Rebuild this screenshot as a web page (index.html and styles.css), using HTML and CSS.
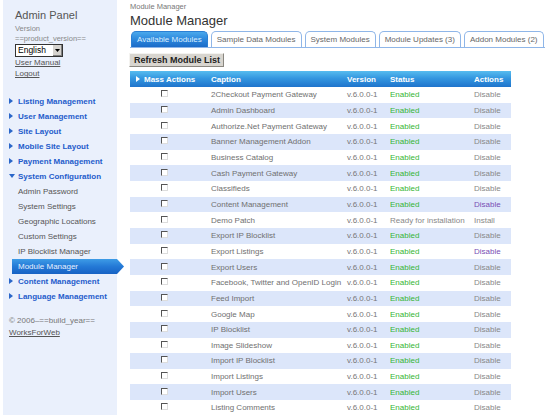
FILE: index.html
```html
<!DOCTYPE html>
<html lang="en">
<head>
<meta charset="utf-8">
<title>Module Manager</title>
<link rel="stylesheet" href="styles.css">
</head>
<body>
<div class="page">
  <aside class="sidebar">
    <div class="brand">
      <h1 class="brand-title">Admin Panel</h1>
      <div class="meta">Version</div>
      <div class="meta">==product_version==</div>
      <div class="lang-select"><span class="lang-value">English</span><span class="lang-btn"><svg width="5" height="3" viewBox="0 0 5 3"><path d="M0 0h5L2.5 3z" fill="#000"/></svg></span></div>
      <a class="side-link" href="#">User Manual</a>
      <a class="side-link" href="#">Logout</a>
    </div>
    <nav class="nav">
      <div class="nav-section"><span class="tri tri-right"></span>Listing Management</div>
      <div class="nav-section"><span class="tri tri-right"></span>User Management</div>
      <div class="nav-section"><span class="tri tri-right"></span>Site Layout</div>
      <div class="nav-section"><span class="tri tri-right"></span>Mobile Site Layout</div>
      <div class="nav-section"><span class="tri tri-right"></span>Payment Management</div>
      <div class="nav-section"><span class="tri tri-down"></span>System Configuration</div>
      <div class="nav-item">Admin Password</div>
      <div class="nav-item">System Settings</div>
      <div class="nav-item">Geographic Locations</div>
      <div class="nav-item">Custom Settings</div>
      <div class="nav-item">IP Blocklist Manager</div>
      <div class="nav-item nav-active">Module Manager</div>
      <div class="nav-section"><span class="tri tri-right"></span>Content Management</div>
      <div class="nav-section"><span class="tri tri-right"></span>Language Management</div>
    </nav>
    <div class="copyright">
      <div>© 2006–==build_year==</div>
      <a class="side-link" href="#">WorksForWeb</a>
    </div>
  </aside>
  <main class="main">
    <div class="breadcrumb">Module Manager</div>
    <h2 class="title">Module Manager</h2>
    <div class="tabs">
      <span class="tab tab-active">Available Modules</span>
      <span class="tab">Sample Data Modules</span>
      <span class="tab">System Modules</span>
      <span class="tab">Module Updates (3)</span>
      <span class="tab">Addon Modules (2)</span>
    </div>
    <div class="toolbar"><button class="btn">Refresh Module List</button></div>
    <div class="grid">
      <div class="row head">
        <div class="c1"><span class="tri tri-white"></span>Mass Actions</div>
        <div>Caption</div>
        <div>Version</div>
        <div>Status</div>
        <div>Actions</div>
      </div>
      <div class="row"><div class="c1"><span class="cb"></span></div><div class="cap">2Checkout Payment Gateway</div><div class="ver">v.6.0.0-1</div><div class="ok">Enabled</div><div class="act">Disable</div></div>
      <div class="row"><div class="c1"><span class="cb"></span></div><div class="cap">Admin Dashboard</div><div class="ver">v.6.0.0-1</div><div class="ok">Enabled</div><div class="act">Disable</div></div>
      <div class="row"><div class="c1"><span class="cb"></span></div><div class="cap">Authorize.Net Payment Gateway</div><div class="ver">v.6.0.0-1</div><div class="ok">Enabled</div><div class="act">Disable</div></div>
      <div class="row"><div class="c1"><span class="cb"></span></div><div class="cap">Banner Management Addon</div><div class="ver">v.6.0.0-1</div><div class="ok">Enabled</div><div class="act">Disable</div></div>
      <div class="row"><div class="c1"><span class="cb"></span></div><div class="cap">Business Catalog</div><div class="ver">v.6.0.0-1</div><div class="ok">Enabled</div><div class="act">Disable</div></div>
      <div class="row"><div class="c1"><span class="cb"></span></div><div class="cap">Cash Payment Gateway</div><div class="ver">v.6.0.0-1</div><div class="ok">Enabled</div><div class="act">Disable</div></div>
      <div class="row"><div class="c1"><span class="cb"></span></div><div class="cap">Classifieds</div><div class="ver">v.6.0.0-1</div><div class="ok">Enabled</div><div class="act">Disable</div></div>
      <div class="row"><div class="c1"><span class="cb"></span></div><div class="cap">Content Management</div><div class="ver">v.6.0.0-1</div><div class="ok">Enabled</div><div class="act visited">Disable</div></div>
      <div class="row"><div class="c1"><span class="cb"></span></div><div class="cap">Demo Patch</div><div class="ver">v.6.0.0-1</div><div class="ready">Ready for installation</div><div class="act">Install</div></div>
      <div class="row"><div class="c1"><span class="cb"></span></div><div class="cap">Export IP Blocklist</div><div class="ver">v.6.0.0-1</div><div class="ok">Enabled</div><div class="act">Disable</div></div>
      <div class="row"><div class="c1"><span class="cb"></span></div><div class="cap">Export Listings</div><div class="ver">v.6.0.0-1</div><div class="ok">Enabled</div><div class="act visited">Disable</div></div>
      <div class="row"><div class="c1"><span class="cb"></span></div><div class="cap">Export Users</div><div class="ver">v.6.0.0-1</div><div class="ok">Enabled</div><div class="act">Disable</div></div>
      <div class="row"><div class="c1"><span class="cb"></span></div><div class="cap">Facebook, Twitter and OpenID Login</div><div class="ver">v.6.0.0-1</div><div class="ok">Enabled</div><div class="act">Disable</div></div>
      <div class="row"><div class="c1"><span class="cb"></span></div><div class="cap">Feed Import</div><div class="ver">v.6.0.0-1</div><div class="ok">Enabled</div><div class="act">Disable</div></div>
      <div class="row"><div class="c1"><span class="cb"></span></div><div class="cap">Google Map</div><div class="ver">v.6.0.0-1</div><div class="ok">Enabled</div><div class="act">Disable</div></div>
      <div class="row"><div class="c1"><span class="cb"></span></div><div class="cap">IP Blocklist</div><div class="ver">v.6.0.0-1</div><div class="ok">Enabled</div><div class="act">Disable</div></div>
      <div class="row"><div class="c1"><span class="cb"></span></div><div class="cap">Image Slideshow</div><div class="ver">v.6.0.0-1</div><div class="ok">Enabled</div><div class="act">Disable</div></div>
      <div class="row"><div class="c1"><span class="cb"></span></div><div class="cap">Import IP Blocklist</div><div class="ver">v.6.0.0-1</div><div class="ok">Enabled</div><div class="act">Disable</div></div>
      <div class="row"><div class="c1"><span class="cb"></span></div><div class="cap">Import Listings</div><div class="ver">v.6.0.0-1</div><div class="ok">Enabled</div><div class="act">Disable</div></div>
      <div class="row"><div class="c1"><span class="cb"></span></div><div class="cap">Import Users</div><div class="ver">v.6.0.0-1</div><div class="ok">Enabled</div><div class="act">Disable</div></div>
      <div class="row"><div class="c1"><span class="cb"></span></div><div class="cap">Listing Comments</div><div class="ver">v.6.0.0-1</div><div class="ok">Enabled</div><div class="act">Disable</div></div>
    </div>
  </main>
</div>
</body>
</html>
```
FILE: styles.css
```css
html, body {
  margin: 0;
  padding: 0;
  background: #fff;
  overflow: hidden;
}
body {
  font-family: "Liberation Sans", Arial, sans-serif;
  font-size: 8px;
  color: #666;
}
.page {
  display: flex;
  align-items: flex-start;
  padding-left: 3px;
  height: 415px;
}
.sidebar {
  flex: 0 0 114px;
  width: 114px;
  height: 415px;
  box-sizing: border-box;
  background: #eaf0fc;
  padding: 8.6px 0 0 6px;
}
.brand {
  padding-left: 6px;
  display: flex;
  flex-direction: column;
  align-items: flex-start;
}
.brand-title {
  margin: 0 0 2px;
  font-size: 11px;
  line-height: 13px;
  font-weight: normal;
  color: #555;
}
.meta {
  font-size: 7.5px;
  line-height: 10px;
  color: #888;
}
.lang-select {
  display: flex;
  align-items: stretch;
  width: 48px;
  height: 13px;
  box-sizing: border-box;
  margin-top: 0.4px;
  border: 1px solid #333;
  background: #fff;
}
.lang-value {
  flex: 1;
  font-size: 8.5px;
  line-height: 11px;
  color: #000;
  padding-left: 2px;
}
.lang-btn {
  width: 9px;
  display: flex;
  align-items: center;
  justify-content: center;
  background: #d6d3ce;
  border-left: 1px solid #fff;
  box-shadow: inset -1px -1px 0 #808080;
}
.side-link {
  font-size: 8px;
  line-height: 11px;
  color: #555;
  text-decoration: underline;
}
.brand .side-link:first-of-type {
  margin-top: 0.5px;
}
.nav {
  margin-top: 14.5px;
}
.nav-section,
.nav-item {
  font-size: 8px;
  line-height: 15px;
  height: 15px;
  white-space: nowrap;
}
.nav-section {
  display: flex;
  align-items: center;
  font-weight: bold;
  color: #1f5ccb;
}
.nav-item {
  padding-left: 9px;
  color: #555;
}
.nav-active {
  margin-left: 3px;
  margin-right: -7px;
  padding-left: 6px;
  color: #e6f1ff;
  background: linear-gradient(to bottom, #3d9be6 0%, #2479d6 50%, #1762c4 100%);
  clip-path: polygon(0 0, calc(100% - 7px) 0, 100% 50%, calc(100% - 7px) 100%, 0 100%);
}
.tri {
  display: inline-block;
  width: 0;
  height: 0;
  margin-right: 5px;
}
.tri-right {
  border-top: 3px solid transparent;
  border-bottom: 3px solid transparent;
  border-left: 4px solid #2a66c9;
}
.tri-down {
  border-left: 3px solid transparent;
  border-right: 3px solid transparent;
  border-top: 4px solid #2a66c9;
  margin-right: 3px;
}
.tri-white {
  border-top: 3px solid transparent;
  border-bottom: 3px solid transparent;
  border-left: 4px solid #fff;
  margin-right: 4px;
}
.copyright {
  margin-top: 11.5px;
  font-size: 8px;
  line-height: 12px;
  color: #777;
  display: flex;
  flex-direction: column;
  align-items: flex-start;
}
.copyright .side-link {
  line-height: 12px;
}

.main {
  margin-left: 13px;
  width: 415px;
  flex: 0 0 415px;
  padding-top: 2px;
}
.breadcrumb {
  font-size: 7.5px;
  line-height: 10.5px;
  color: #777;
}
.title {
  margin: 0;
  font-size: 13px;
  line-height: 16px;
  font-weight: normal;
  color: #333;
}
.tabs {
  display: flex;
  gap: 3px;
  margin-top: 2.5px;
  padding-left: 1px;
  border-bottom: 1px solid #8fb6e8;
}
.tab {
  height: 16px;
  box-sizing: border-box;
  padding: 0 5px;
  border: 1px solid #8fb6e8;
  border-bottom: none;
  border-radius: 5px 5px 0 0;
  background: #fff;
  color: #666;
  font-size: 8px;
  line-height: 16px;
  white-space: nowrap;
}
.tab-active {
  background: linear-gradient(to bottom, #4aa9ec 0%, #2a84da 55%, #1b6bc8 100%);
  border-color: #2a7fd4;
  color: #dbeeff;
}
.toolbar {
  margin-top: 5px;
  margin-left: -1px;
}
.btn {
  font-family: "Liberation Sans", Arial, sans-serif;
  font-size: 9px;
  font-weight: bold;
  color: #222;
  height: 14px;
  line-height: 12px;
  padding: 0 3px 0 4px;
  background: #d8d5cf;
  border: 1px solid;
  border-color: #f4f3f0 #8a8780 #8a8780 #f4f3f0;
  border-radius: 0;
  display: block;
}
.grid {
  margin-top: 4px;
  width: 381px;
}
.row {
  display: grid;
  grid-template-columns: 77px 136px 43px 84px 41px;
  height: 15.67px;
  align-items: center;
  font-size: 8px;
  white-space: nowrap;
}
.row > div {
  padding-left: 4px;
}
.row > .c1 {
  padding-left: 0;
}
.row:nth-child(odd) {
  background: #dce6fa;
}
.row.head {
  height: 16px;
  background: linear-gradient(to bottom, #57bcef 0%, #3497e0 45%, #1f74cc 100%);
  color: #fff;
  font-weight: bold;
}
.head .c1 {
  display: flex;
  align-items: center;
  padding-left: 6px;
}
.row .c1 {
  display: flex;
  align-items: center;
}
.cb {
  display: block;
  width: 7px;
  height: 7px;
  box-sizing: border-box;
  margin-left: 31px;
  margin-top: -2px;
  background: #fff;
  border: 1px solid;
  border-color: #555 #ddd #ddd #555;
}
.cap { color: #707070; }
.ver { color: #777; }
.ok { color: #34b534; }
.ready { color: #888; }
.act { color: #888; }
.act.visited { color: #7a4fb5; }
```
